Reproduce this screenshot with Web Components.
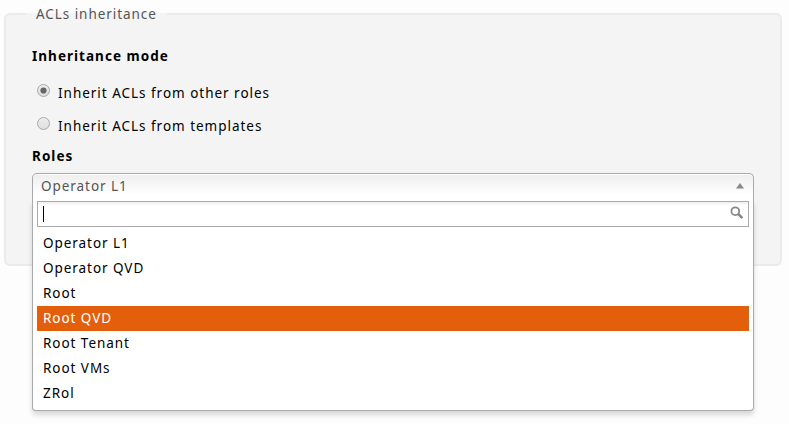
<!DOCTYPE html>
<html lang="en"><head><meta charset="utf-8"><title>ACLs inheritance</title>
<style>
html,body{margin:0;height:100%}
body{background:#fdfdfd;font:13.5px/20px "Noto Sans","Open Sans",sans-serif;letter-spacing:.95px;color:#000;overflow:hidden;box-sizing:border-box;padding:4px 7px 0 4px}
</style></head><body>
<acl-fieldset legend="ACLs inheritance">
<acl-heading>Inheritance mode</acl-heading>
<acl-radio checked>Inherit ACLs from other roles</acl-radio>
<acl-radio>Inherit ACLs from templates</acl-radio>
<acl-heading class="roles">Roles</acl-heading>
<acl-select value="Operator L1">
<acl-option>Operator L1</acl-option><acl-option>Operator QVD</acl-option><acl-option>Root</acl-option><acl-option active>Root QVD</acl-option><acl-option>Root Tenant</acl-option><acl-option>Root VMs</acl-option><acl-option>ZRol</acl-option>
</acl-select>
</acl-fieldset>
<script>
const define=(name,html,init)=>customElements.define(name,class extends HTMLElement{
  constructor(){super();this.attachShadow({mode:'open'}).innerHTML=html;}
  connectedCallback(){if(init)init(this,this.shadowRoot);}
});
define('acl-fieldset',`<style>
:host{display:block}
fieldset{box-sizing:border-box;height:262px;margin:0;padding:22px 26px 0;min-width:0;border:2px solid #ebebeb;border-radius:6px;background:#f4f4f4}
legend{margin-left:-6px;padding:0 10px;height:20px;line-height:20px;color:#555}
</style><fieldset><legend></legend><slot></slot></fieldset>`,(h,r)=>{r.querySelector('legend').textContent=h.getAttribute('legend')});
define('acl-heading',`<style>:host{display:block;height:20px;font-weight:700;letter-spacing:1.03px}:host(.roles){margin-top:10px}</style><slot></slot>`);
define('acl-radio',`<style>
:host{display:flex;align-items:flex-start;height:20px;padding-left:5px;margin-top:13px;gap:8px;letter-spacing:.98px}
:host([checked]){margin-top:17px}
svg{flex:none;margin-top:1px}.dot{display:none}:host([checked]) .dot{display:block}
</style><svg width="13" height="13"><defs><linearGradient id="g" x2="0" y2="1"><stop stop-color="#ededed"/><stop offset="1" stop-color="#dedede"/></linearGradient></defs><circle cx="6.5" cy="6.5" r="6" fill="url(#g)" stroke="#a8a8a8"/><circle class="dot" cx="6.5" cy="6.5" r="3.1" fill="#666"/></svg><span><slot></slot></span>`);
define('acl-option',`<style>:host{display:block;height:25px;line-height:25px;padding-left:6px}:host([active]){background:#e35f0c;color:#fff}</style><slot></slot>`);
define('acl-select',`<style>
:host{display:block;position:relative;width:722px;height:238px;margin-top:7px;box-sizing:border-box}
.head{box-sizing:border-box;height:27px;border:1px solid #aaa;border-bottom:0;border-radius:5px 5px 0 0;background:linear-gradient(#eee,#fff 80%);box-shadow:inset 0 1px #fff;display:flex;justify-content:space-between;padding:2px 9px 0 8px;color:#555}
.head svg{margin-top:7px}
.drop{position:absolute;top:27px;left:0;right:0;height:211px;box-sizing:border-box;border:1px solid #aaa;border-top:0;border-radius:0 0 4px 4px;background:#fff;box-shadow:0 4px 5px rgba(0,0,0,.15);padding:1px 4px 0}
.search{display:flex;justify-content:space-between;box-sizing:border-box;height:26px;border:1px solid #aaa;background:linear-gradient(#eee,#fff 15%);margin-bottom:4px;padding:4px 4px 0 5px}
.caret{width:1px;height:16px;background:#000}
</style><div class="head"><span></span><svg width="8" height="6"><path d="M0 5.5 4 0 8 5.5Z" fill="#888"/></svg></div>
<div class="drop"><div class="search"><i class="caret"></i><svg width="14" height="14" fill="none" stroke="#888"><circle cx="5.3" cy="5.2" r="3.9" stroke-width="1.8"/><path d="m8.2 8 4.2 4.2" stroke-width="2.5"/></svg></div><slot></slot></div>`,(h,r)=>{r.querySelector('span').textContent=h.getAttribute('value')});
</script></body></html>
